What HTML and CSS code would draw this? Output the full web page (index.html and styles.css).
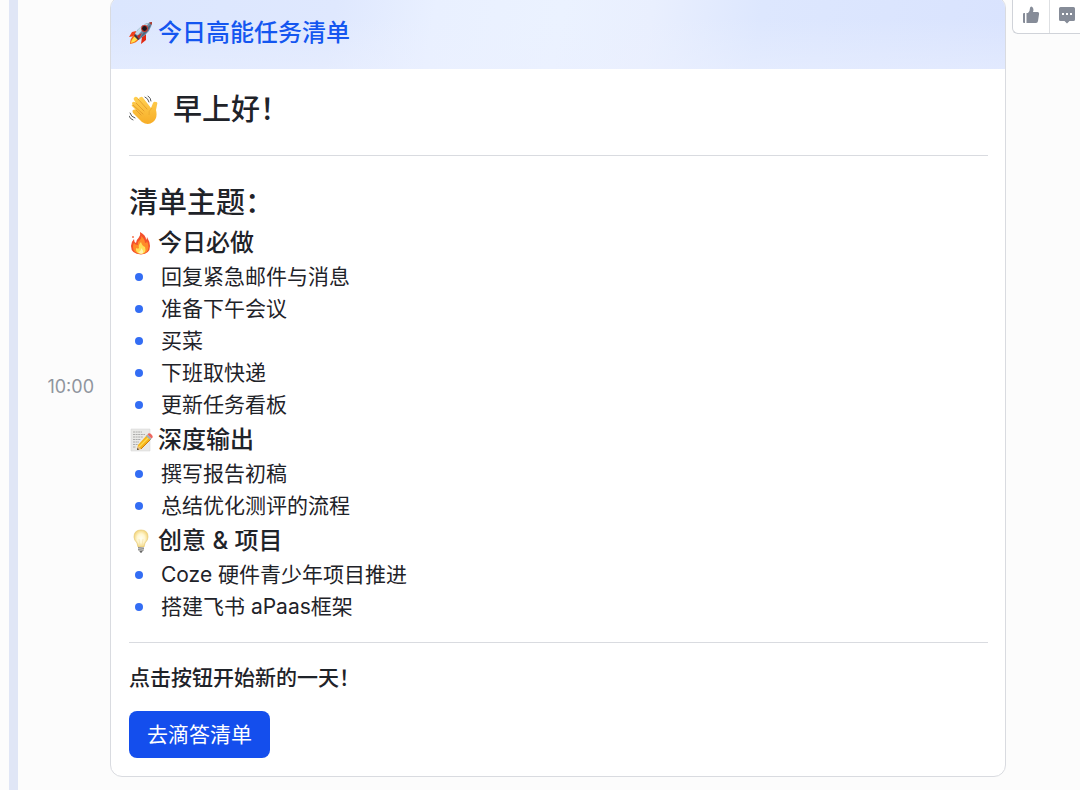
FILE: index.html
```html
<!DOCTYPE html>
<html lang="zh-CN">
<head>
    <meta charset="UTF-8">
    <meta name="viewport" content="width=device-width, initial-scale=1.0">
    <title>今日高能任务清单</title>
    <link rel="stylesheet" href="styles.css">
</head>
<body>
    <div class="chat">
        <div class="thread-line"></div>
        <main class="message">
            <time class="message-time" datetime="10:00">10:00</time>

            <article class="card">
                <header class="card-header">
                    <svg class="emoji" viewBox="0 0 24 24" aria-hidden="true">
                        <path d="M7 10 3 11 0 16 6 15z" fill="#f0401a"/>
                        <path d="M13 16 12 23 17 19 17 13z" fill="#e02812"/>
                        <path d="M5 14Q1 17 1 23 8 22 10 18z" fill="#f56a16"/>
                        <path d="M6 15Q2 19 2 22 6 21 9 18z" fill="#ffe34a"/>
                        <path d="M6 13Q11 3 23 1 23 10 11 18L8 17z" fill="#6f8ea6"/>
                        <path d="M6 13Q11 4 20 2L9 14z" fill="#c4dbe8"/>
                        <path d="M11 17Q20 11 22 3L16 9z" fill="#4f6980"/>
                        <path d="M20 1.500Q21 1 23 1 23 3 22.500 4z" fill="#b23427"/>
                        <circle cx="15.500" cy="7.500" r="3.400" fill="#c8362a"/>
                        <circle cx="15.500" cy="7.500" r="2.400" fill="#17151c"/>
                        <path d="M6 13 11 18 9 19 5 15z" fill="#393747"/>
                        <path d="M8 15 13 12 10 18z" fill="#c92b1c"/>
                    </svg>
                    <h1 class="card-title">今日高能任务清单</h1>
                </header>

                <div class="card-body">
                    <h2 class="greeting">
                        <svg class="emoji emoji-large" viewBox="0 0 30 30" aria-hidden="true">
                            <defs>
                                <linearGradient id="hand" x1="0" y1="0" x2="0" y2="1">
                                    <stop offset="0" stop-color="#ffd052"/>
                                    <stop offset="1" stop-color="#f7ad27"/>
                                </linearGradient>
                            </defs>
                            <path d="M4 10Q2 8 4 7 5 6 7 8L5 5Q4 3 6 2 7 1 9 3L11 6 10 4Q10 2 12 2 13 1 15 4L22 13 24 8Q25 6 27 7 29 7 28 10L27 15Q29 23 24 27 19 31 13 27L4 18Q3 16 4 15 5 14 7 15L3 11Q2 9 4 10z" fill="url(#hand)"/>
                            <path d="M7 8 15 16M9 4 18 14M4 10 14 19M7 15 12 20" fill="none" stroke="#df9526" stroke-width=".8" stroke-linecap="round"/>
                            <path d="M23 13Q19 16 20 20" fill="none" stroke="#eba82c" stroke-width=".8"/>
                            <path d="M16 2Q19 3 20 7M19 1Q22 3 22 6M1 18Q2 22 6 23M0 21Q1 24 4 25" fill="none" stroke="#56585b" stroke-width="1" stroke-linecap="round"/>
                        </svg>
                        早上好！
                    </h2>

                    <hr class="divider">

                    <h2 class="topic">清单主题：</h2>

                    <h3 class="group-title">
                        <svg class="emoji" viewBox="0 0 24 24" aria-hidden="true">
                            <path d="M11 1Q17 4 17 9 18 8 18 6 21 11 21 15 21 23 12 23.500 2 23 2 15 2 11 5 8 5 11 7 12 7 9 9.500 7 12 4 11 1z" fill="#f4502b"/>
                            <path d="M12 5Q16 8 16 12 18 12 18 10 19.500 13 19.500 16 19 23 12 23 4 22 4 16 4 13 5 12 6 14 9 14 8 11 11 9 13 7 12 5z" fill="#ff8b29"/>
                            <path d="M12 11Q13 15 16 16 18 22 12 23 6 22 7 17 9 18 10 17 9 14 12 11z" fill="#ffdf56"/>
                            <path d="M12 17Q15 20 14 22 12 24 9 21 12 21 12 17z" fill="#fff3b0"/>
                            <circle cx="4" cy="6" r="1" fill="#f47954"/>
                        </svg>
                        今日必做
                    </h3>
                    <ul class="tasks">
                        <li>回复紧急邮件与消息</li>
                        <li>准备下午会议</li>
                        <li>买菜</li>
                        <li>下班取快递</li>
                        <li>更新任务看板</li>
                    </ul>

                    <h3 class="group-title">
                        <svg class="emoji" viewBox="0 0 24 24" aria-hidden="true">
                            <path d="M2 1H21V23H2z" fill="#e9e9e7" stroke="#d2d2d0" stroke-width=".5"/>
                            <path d="M4 4H13M4 6.500H16M4 9H14M4 11.500H12M4 14H10M4 16.500H9M4 19H7" stroke="#9c9c9c" stroke-width=".8" stroke-dasharray="2 .6"/>
                            <path d="M8 22 9 17 18 7 22 11 12 21z" fill="#f5b51b"/>
                            <path d="M10 19 20 9" stroke="#ffdc4e" stroke-width="1.500"/>
                            <path d="M12 21 22 11" stroke="#cf7c0b" stroke-width="1"/>
                            <path d="M8 22 9 18 12 21z" fill="#e7bd88"/>
                            <path d="M8 22 8.500 20 10 21.500z" fill="#333"/>
                            <path d="M17 8 18.500 6.500 22.500 10.500 21.500 12z" fill="#9eb0ba"/>
                            <path d="M18.500 6.500Q20 4 22.500 6.500 25 9 22.500 10.500z" fill="#ed675f"/>
                        </svg>
                        深度输出
                    </h3>
                    <ul class="tasks">
                        <li>撰写报告初稿</li>
                        <li>总结优化测评的流程</li>
                    </ul>

                    <h3 class="group-title">
                        <svg class="emoji" viewBox="0 0 24 24" aria-hidden="true">
                            <defs>
                                <radialGradient id="bulb">
                                    <stop offset="0" stop-color="#fffef2"/>
                                    <stop offset=".55" stop-color="#fff6cf"/>
                                    <stop offset="1" stop-color="#f5d882"/>
                                </radialGradient>
                            </defs>
                            <path d="M12 1Q19 1 19 8 19 11 16 14L15 18H9L8 14Q5 11 5 8 5 1 12 1z" fill="url(#bulb)" stroke="#e5c876" stroke-width=".7"/>
                            <path d="M10 10 11 17M14 10 13 17" stroke="#f0dfa8" stroke-width=".6"/>
                            <path d="M9 18H15V21L13 23H11L9 21z" fill="#8c8c8a"/>
                            <path d="M9 19.500 15 18.500M9 21.500 15 20.500" stroke="#d2d2d0" stroke-width=".8"/>
                            <path d="M11 23H13" stroke="#444" stroke-width="1"/>
                        </svg>
                        创意 &amp; 项目
                    </h3>
                    <ul class="tasks">
                        <li>Coze 硬件青少年项目推进</li>
                        <li>搭建飞书 aPaas框架</li>
                    </ul>

                    <hr class="divider">

                    <p class="hint">点击按钮开始新的一天！</p>
                    <button class="open-button" type="button">去滴答清单</button>
                </div>
            </article>

            <div class="toolbar">
                <button class="tool" type="button" aria-label="点赞">
                    <svg viewBox="0 0 18 18" aria-hidden="true">
                        <path d="M2 7H3V17H2Q1 17 1 16V8Q1 7 2 7z"/>
                        <path d="M4.500 7H6Q8 5 8 2 8 .5 9.500 .5 11.500 1 11.500 4L11 6H15.500Q17.500 6 17 8.500L16 15Q15.700 17 14 17H4.500z"/>
                    </svg>
                </button>
                <button class="tool" type="button" aria-label="回复">
                    <svg viewBox="0 0 18 18" aria-hidden="true">
                        <path d="M2.500 1H15.500Q17 1 17 2.500V13.500Q17 15 15.500 15H11.500L9 17.500 6.500 15H2.500Q1 15 1 13.500V2.500Q1 1 2.500 1z"/>
                        <path class="dots" d="M4 7H6V9H4zM8 7H10V9H8zM12 7H14V9H12z"/>
                    </svg>
                </button>
            </div>
        </main>
    </div>
</body>
</html>
```
FILE: styles.css
```css
* {
    box-sizing: border-box;
}
body {
    margin: 0;
    font-family: Inter, "Noto Sans CJK SC", sans-serif;
    font-size: 21px;
    color: #1f2329;
    background: #fcfcfc;
}
h1, h2, h3, p, ul {
    margin: 0;
    padding: 0;
}
button {
    font-family: inherit;
    cursor: pointer;
}
.chat {
    display: flex;
    align-items: flex-start;
    min-height: 100vh;
    padding-left: 9px;
    overflow: hidden;
}
.thread-line {
    flex: none;
    align-self: stretch;
    width: 9px;
    background: #e0e6f6;
}
.message {
    flex: 1;
    display: flex;
    align-items: flex-start;
    min-width: 0;
    margin-top: -4px;
}
.message-time {
    flex: none;
    align-self: center;
    width: 92px;
    padding-right: 16px;
    text-align: right;
    font-size: 18px;
    color: #8f959e;
}
.card {
    flex: 1;
    min-width: 0;
    border: 1px solid #d9dbe0;
    border-radius: 12px;
    background: #fff;
    overflow: hidden;
}
.card-header {
    display: flex;
    align-items: center;
    gap: 5px;
    height: 72px;
    padding: 0 18px;
    background:
        linear-gradient(to bottom, rgba(235, 240, 255, 0) 30%, rgba(235, 240, 255, 0.5)),
        linear-gradient(100deg, #dbe6fe 0%, #dfe8fe 25%, #e9f0ff 36%, #ebf2ff 50%, #e9effe 60%, #dde7fe 72%, #d9e3fe 100%);
}
.card-title {
    font-size: 24px;
    line-height: 36px;
    font-weight: 500;
    color: #1456f0;
}
.emoji {
    flex: none;
    width: 24px;
    height: 24px;
}
.emoji-large {
    width: 30px;
    height: 30px;
}
.card-body {
    padding: 18px 17px 18px 18px;
}
.greeting,
.topic {
    font-size: 29px;
    line-height: 45px;
    font-weight: 500;
}
.greeting {
    display: flex;
    align-items: center;
    gap: 14px;
}
.divider {
    height: 1px;
    margin: 23px 0 24px;
    border: 0;
    background: #d9dbe0;
}
.group-title {
    display: flex;
    align-items: center;
    gap: 5px;
    font-size: 24px;
    line-height: 36px;
    font-weight: 500;
}
.tasks {
    padding-bottom: 1px;
    list-style: none;
}
.tasks li {
    display: flex;
    align-items: center;
    gap: 18px;
    padding-left: 6px;
    line-height: 32px;
}
.tasks li::before {
    content: "";
    width: 8px;
    height: 8px;
    border-radius: 50%;
    background: #336df4;
}
.tasks + .divider {
    margin: 18px 0;
}
.hint {
    line-height: 34px;
    font-weight: 500;
}
.open-button {
    display: block;
    height: 47px;
    margin-top: 16px;
    padding: 0 18px 4px;
    border: 0;
    border-radius: 8px;
    font-size: 21px;
    color: #fff;
    background: #144eed;
}
.toolbar {
    flex: none;
    display: flex;
    width: 68px;
    height: 38px;
    margin-left: 6px;
    border: 1px solid #d0d3d9;
    border-right: 0;
    border-bottom-left-radius: 6px;
    background: #fff;
}
.tool {
    display: flex;
    flex: none;
    align-items: center;
    justify-content: center;
    width: 36px;
    padding: 0;
    border: 0;
    background: none;
}
.tool + .tool {
    width: 35px;
    border-left: 1px solid #dee0e3;
}
.tool svg {
    flex: none;
    width: 18px;
    height: 18px;
    fill: #868c98;
}
.tool .dots {
    fill: #fff;
}
```
